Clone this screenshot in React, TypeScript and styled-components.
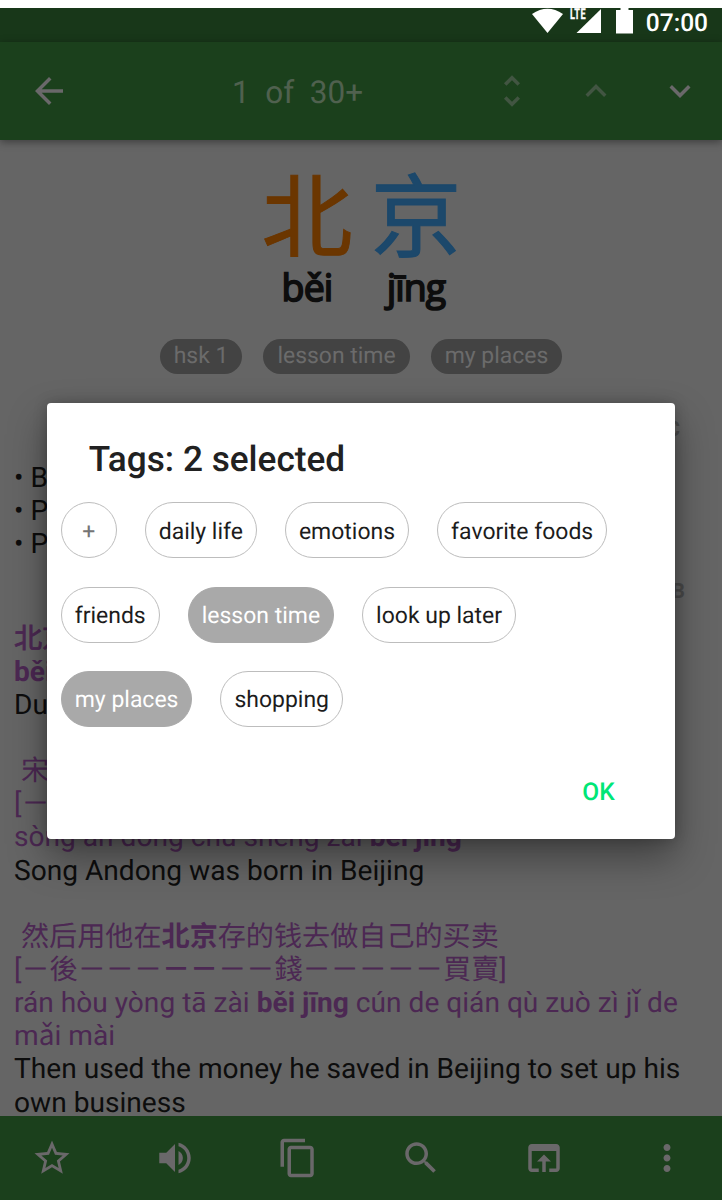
import React from "react";
import styled, { createGlobalStyle } from "styled-components";

const Global = createGlobalStyle`
  * { box-sizing: border-box; }
  html, body { margin: 0; padding: 0; background: #fff; }
  body {
    font-family: Roboto, "Noto Sans CJK SC", sans-serif;
    text-rendering: geometricPrecision;
    overflow: hidden;
  }
`;

const Screen = styled.div`
  position: relative;
  width: 722px;
  height: 1200px;
  padding-top: 8px;
  display: flex;
  flex-direction: column;
  overflow: hidden;
  background: #fff;
`;

const StatusBar = styled.div`
  height: 34px;
  flex: none;
  display: flex;
  justify-content: flex-end;
  align-items: flex-start;
  padding-right: 14px;
  background: #183719;
  color: #fff;
`;

const StatusIcon = styled.svg<{ $gap: number }>`
  display: block;
  flex: none;
  margin-right: ${(p) => p.$gap}px;
  fill: #fff;
`;

const Network = styled.div`
  position: relative;
  width: 31px;
  height: 26px;
  margin-right: 15px;
  display: flex;
  justify-content: flex-end;
`;

const NetworkLabel = styled.span`
  position: absolute;
  left: 0;
  top: -1px;
  font-size: 15px;
  font-weight: 700;
  line-height: 15px;
  letter-spacing: 0.7px;
  -webkit-text-stroke: 0.3px #fff;
  transform: scaleX(0.61);
  transform-origin: 0 0;
`;

const Clock = styled.span`
  font-size: 24.5px;
  font-weight: 500;
  line-height: 29px;
`;

const AppBar = styled.header`
  position: relative;
  z-index: 1;
  height: 98px;
  flex: none;
  display: flex;
  align-items: center;
  padding: 0 21px 0 28px;
  background: #1b401c;
  box-shadow: 0 2px 8px rgba(0, 0, 0, 0.4);
`;

const Counter = styled.div`
  width: 132px;
  margin-left: 162px;
  margin-right: 126.5px;
  padding-top: 2px;
  font-size: 31.5px;
  line-height: 37px;
  white-space: pre;
  color: #50614f;
`;

const BarIcon = styled.svg<{ $dim?: boolean; $gap?: number }>`
  width: 42px;
  height: 42px;
  flex: none;
  display: block;
  margin-right: ${(p) => p.$gap ?? 0}px;
  fill: ${(p) => (p.$dim ? "#425542" : "#6a686a")};
`;

const Content = styled.main`
  flex: 1;
  min-height: 0;
  overflow: hidden;
  background: #656565;
  color: #0d0d0d;
`;

const Headword = styled.div`
  height: 190px;
  padding: 18px 0 0 1px;
  display: flex;
  justify-content: center;
`;

const Syllable = styled.div<{ $color: string }>`
  width: 109px;
  display: flex;
  flex-direction: column;
  align-items: center;
  span {
    height: 106px;
    font-family: "Noto Sans CJK SC", sans-serif;
    font-size: 91px;
    line-height: 106px;
    color: ${(p) => p.$color};
    -webkit-text-stroke: 1px ${(p) => p.$color};
  }
  b {
    font-family: "Open Sans", sans-serif;
    font-weight: 400;
    font-size: 37.5px;
    line-height: 46px;
    letter-spacing: -0.9px;
    -webkit-text-stroke: 1.7px #0d0d0d;
  }
`;

const WordTags = styled.div`
  display: flex;
  justify-content: center;
  gap: 21px;
  margin-top: 9px;
`;

const WordTag = styled.span`
  height: 35px;
  padding: 0 14px;
  border-radius: 18px;
  font-size: 22.95px;
  line-height: 34px;
  background: #434343;
  color: #6b6b6b;
`;

const Label = styled.div<{ $right: number; $top: number }>`
  height: 32px;
  margin-top: ${(p) => p.$top}px;
  padding-right: ${(p) => p.$right}px;
  text-align: right;
  font-size: 21px;
  font-weight: 700;
  line-height: 32px;
  color: #4b4b4b;
`;

const Entry = styled.div<{ $top: number }>`
  margin-top: ${(p) => p.$top}px;
  padding-left: 14px;
  font-size: 28.12px;
  line-height: 33.15px;
  white-space: pre;
`;

const Line = styled.div<{ $purple?: boolean }>`
  height: 33.15px;
  color: ${(p) => (p.$purple ? "#4c2853" : "#0d0d0d")};
`;

const Medium = styled.span`
  -webkit-text-stroke: 0.8px #4c2853;
`;

const Toolbar = styled.footer`
  height: 84px;
  flex: none;
  display: flex;
  align-items: center;
  justify-content: space-between;
  padding: 0 34.4px 0 30.6px;
  background: #1b401c;
`;

const Dialog = styled.section`
  position: absolute;
  z-index: 2;
  left: 46.7px;
  top: 403px;
  width: 628.5px;
  height: 436px;
  border-radius: 4px;
  background: #fff;
  box-shadow: 0 18px 38px rgba(0, 0, 0, 0.38), 0 0 14px rgba(0, 0, 0, 0.22);
  display: flex;
  flex-direction: column;
`;

const DialogTitle = styled.h2`
  margin: 35px 0 0 42px;
  font-size: 35.2px;
  font-weight: 500;
  line-height: 42px;
  color: #212121;
`;

const Tags = styled.div`
  display: flex;
  flex-wrap: wrap;
  gap: 28.2px 28px;
  padding: 22.4px 14px 0;
`;

const Tag = styled.button<{ $on?: boolean; $add?: boolean }>`
  height: 56px;
  min-width: 56px;
  padding: 2px 13px 0;
  border: 1.3px solid ${(p) => (p.$on ? "#a9a9a9" : "#bdbdbd")};
  border-radius: 28px;
  font: 400 22.97px/29px Roboto, sans-serif;
  text-rendering: geometricPrecision;
  background: ${(p) => (p.$on ? "#a9a9a9" : "#fff")};
  color: ${(p) => (p.$on ? "#fff" : p.$add ? "#757575" : "#1c1c1c")};
`;

const Actions = styled.div`
  display: flex;
  justify-content: flex-end;
  margin-top: auto;
  padding: 0 60.5px 33.5px 0;
`;

const Ok = styled.button`
  border: 0;
  padding: 0;
  background: none;
  font: 500 24.5px/29px Roboto, sans-serif;
  text-rendering: geometricPrecision;
  color: #00e676;
`;

const paths = {
  back: "M20 11H7.83l5.59-5.59L12 4l-8 8 8 8 1.41-1.41L7.83 13H20v-2z",
  unfold:
    "M12 5.83L15.17 9l1.41-1.41L12 3 7.41 7.59 8.83 9 12 5.83zm0 12.34L8.83 15l-1.41 1.41L12 21l4.59-4.59L15.17 15 12 18.17z",
  up: "M12 8l-6 6 1.41 1.41L12 10.83l4.59 4.58L18 14z",
  down: "M16.59 8.59L12 13.17 7.41 8.59 6 10l6 6 6-6z",
};

const tools = [
  "M22 9.24l-7.19-.62L12 2 9.19 8.63 2 9.24l5.46 4.73L5.82 21 12 17.27 18.18 21l-1.63-7.03L22 9.24zM12 15.4l-3.76 2.27 1-4.28-3.32-2.88 4.38-.38L12 6.1l1.71 4.04 4.38.38-3.32 2.88 1 4.28L12 15.4z",
  "M3 9v6h4l5 5V4L7 9H3zm13.5 3c0-1.77-1.02-3.29-2.5-4.03v8.05c1.48-.73 2.5-2.25 2.5-4.02zM14 3.23v2.06c2.89.86 5 3.54 5 6.71s-2.11 5.85-5 6.71v2.06c4.01-.91 7-4.49 7-8.77s-2.99-7.86-7-8.77z",
  "M16 1H4c-1.1 0-2 .9-2 2v14h2V3h12V1zm3 4H8c-1.1 0-2 .9-2 2v14c0 1.1.9 2 2 2h11c1.1 0 2-.9 2-2V7c0-1.1-.9-2-2-2zm0 16H8V7h11v14z",
  "M15.5 14h-.79l-.28-.27C15.41 12.59 16 11.11 16 9.5 16 5.91 13.09 3 9.5 3S3 5.91 3 9.5 5.91 16 9.5 16c1.61 0 3.09-.59 4.23-1.57l.27.28v.79l5 4.99L20.49 19l-4.99-5zm-6 0C7.01 14 5 11.99 5 9.5S7.01 5 9.5 5 14 7.01 14 9.5 11.99 14 9.5 14z",
  "M19 4H5c-1.11 0-2 .9-2 2v12c0 1.1.89 2 2 2h4v-2H5V8h14v10h-4v2h4c1.1 0 2-.9 2-2V6c0-1.1-.89-2-2-2zm-7 6l-4 4h3v6h2v-6h3l-4-4z",
  "M12 8c1.1 0 2-.9 2-2s-.9-2-2-2-2 .9-2 2 .9 2 2 2zm0 2c-1.1 0-2 .9-2 2s.9 2 2 2 2-.9 2-2-.9-2-2-2zm0 6c-1.1 0-2 .9-2 2s.9 2 2 2 2-.9 2-2-.9-2-2-2z",
];

const Icon = ({ d, dim, gap }: { d: string; dim?: boolean; gap?: number }) => (
  <BarIcon viewBox="0 0 24 24" $dim={dim} $gap={gap}>
    <path d={d} />
  </BarIcon>
);

const tagList = [
  "daily life",
  "emotions",
  "favorite foods",
  "friends",
  "lesson time",
  "look up later",
  "my places",
  "shopping",
];
const selected = ["lesson time", "my places"];

export default function App() {
  return (
    <>
      <Global />
      <Screen>
        <StatusBar>
          <StatusIcon width="31" height="26" viewBox="0 0 31 26" $gap={7}>
            <path d="M0 6 Q15.5 -4.5 31 6 L15.5 25 Z" />
          </StatusIcon>
          <Network>
            <NetworkLabel>LTE</NetworkLabel>
            <svg width="25" height="26" viewBox="0 0 25 26" fill="#fff">
              <path d="M25 1V25H0.5Z" />
            </svg>
          </Network>
          <StatusIcon width="17" height="26" viewBox="0 0 17 26" $gap={13}>
            <path d="M4.5 0H12.5V2H17V25.5H0V2H4.5Z" />
          </StatusIcon>
          <Clock>07:00</Clock>
        </StatusBar>
        <AppBar>
          <Icon d={paths.back} />
          <Counter>{"1  of  30+"}</Counter>
          <Icon d={paths.unfold} dim gap={42.5} />
          <Icon d={paths.up} dim gap={42} />
          <Icon d={paths.down} />
        </AppBar>
        <Content>
          <Headword>
            <Syllable $color="#6b3600">
              <span>北</span>
              <b>běi</b>
            </Syllable>
            <Syllable $color="#1c486b">
              <span>京</span>
              <b>jīng</b>
            </Syllable>
          </Headword>
          <WordTags>
            <WordTag>hsk 1</WordTag>
            <WordTag>lesson time</WordTag>
            <WordTag>my places</WordTag>
          </WordTags>
          <Label $right={42} $top={40}>C</Label>
          <Entry $top={15}>
            <Line>• B</Line>
            <Line>• P</Line>
            <Line>• P</Line>
          </Entry>
          <Label $right={37} $top={16}>B</Label>
          <Entry $top={13.2}>
            <Line $purple>
              <Medium>北京</Medium>
            </Line>
            <Line $purple>
              <b>běi</b>
            </Line>
            <Line>Du</Line>
            <Line />
            <Line $purple> 宋</Line>
            <Line $purple>[－</Line>
            <Line $purple>
              sòng ān dōng chū shēng zài <b>běi jīng</b>
            </Line>
            <Line>Song Andong was born in Beijing</Line>
            <Line />
            <Line $purple>
              {" "}然后用他在<b>北京</b>存的钱去做自己的买卖
            </Line>
            <Line $purple>
              [－後－－－<b>－－</b>－－錢－－－－－買賣]
            </Line>
            <Line $purple>
              rán hòu yòng tā zài <b>běi jīng</b> cún de qián qù zuò zì jǐ de
            </Line>
            <Line $purple>mǎi mài</Line>
            <Line>Then used the money he saved in Beijing to set up his</Line>
            <Line>own business</Line>
          </Entry>
        </Content>
        <Toolbar>
          {tools.map((d) => (
            <Icon key={d} d={d} />
          ))}
        </Toolbar>
        <Dialog>
          <DialogTitle>Tags: 2 selected</DialogTitle>
          <Tags>
            <Tag $add>+</Tag>
            {tagList.map((t) => (
              <Tag key={t} $on={selected.includes(t)}>
                {t}
              </Tag>
            ))}
          </Tags>
          <Actions>
            <Ok>OK</Ok>
          </Actions>
        </Dialog>
      </Screen>
    </>
  );
}
